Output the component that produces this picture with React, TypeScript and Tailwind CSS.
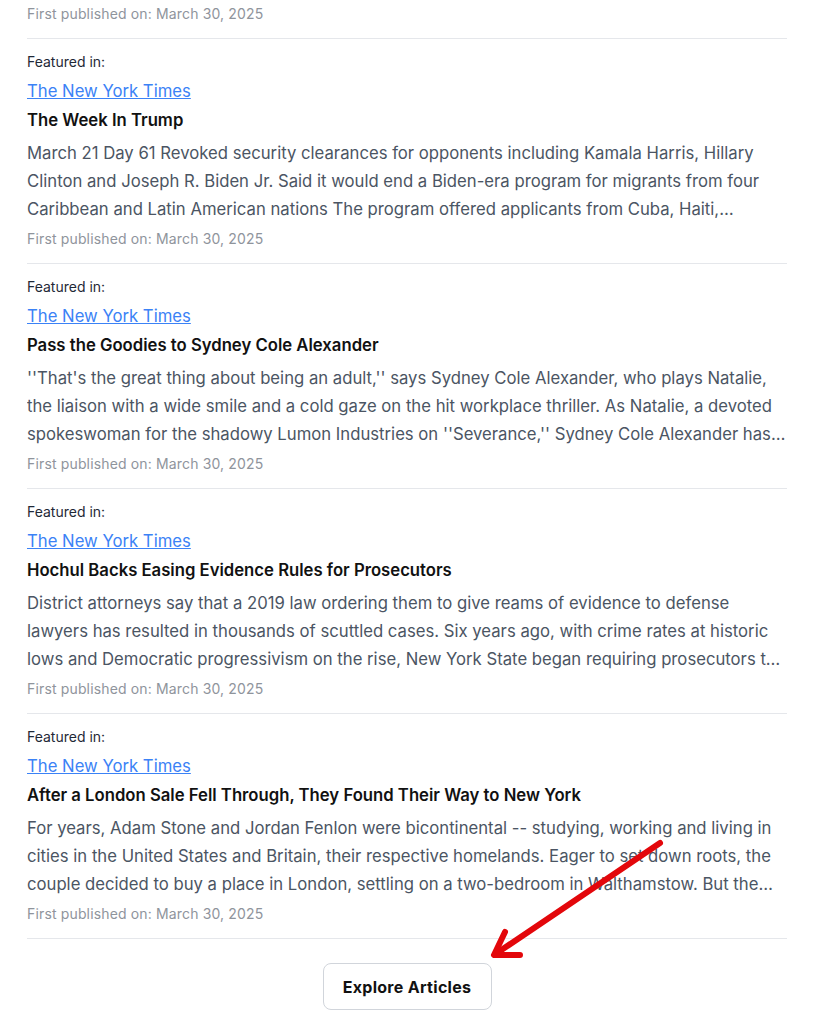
import React from 'react';

interface Article {
  title: string;
  summary: string;
}

const ARTICLES: Article[] = [
  {
    title: 'The Week In Trump',
    summary:
      'March 21 Day 61 Revoked security clearances for opponents including Kamala Harris, Hillary Clinton and Joseph R. Biden Jr. Said it would end a Biden-era program for migrants from four Caribbean and Latin American nations The program offered applicants from Cuba, Haiti, Nicaragua and Venezuela a chance to live and work in the United States.',
  },
  {
    title: 'Pass the Goodies to Sydney Cole Alexander',
    summary:
      "''That's the great thing about being an adult,'' says Sydney Cole Alexander, who plays Natalie, the liaison with a wide smile and a cold gaze on the hit workplace thriller. As Natalie, a devoted spokeswoman for the shadowy Lumon Industries on ''Severance,'' Sydney Cole Alexander has become a fan favorite.",
  },
  {
    title: 'Hochul Backs Easing Evidence Rules for Prosecutors',
    summary:
      'District attorneys say that a 2019 law ordering them to give reams of evidence to defense lawyers has resulted in thousands of scuttled cases. Six years ago, with crime rates at historic lows and Democratic progressivism on the rise, New York State began requiring prosecutors to turn over evidence.',
  },
  {
    title: 'After a London Sale Fell Through, They Found Their Way to New York',
    summary:
      'For years, Adam Stone and Jordan Fenlon were bicontinental -- studying, working and living in cities in the United States and Britain, their respective homelands. Eager to set down roots, the couple decided to buy a place in London, settling on a two-bedroom in Walthamstow. But the deal fell apart.',
  },
];

const font = { fontFamily: 'Inter, "Noto Sans", sans-serif' };

const ArticleItem: React.FC<{ article: Article }> = ({ article }) => (
  <div className="h-[225px] border-t border-[#e5e7eb] pt-[14px]">
    <p className="text-[14px] leading-[18px] text-[#1f2937]">Featured in:</p>
    <a href="#" className="mt-[6px] block text-[16.7px] leading-[28px] text-[#3b82f6] underline w-fit">
      The New York Times
    </a>
    <h3 className="mt-[1px] text-[16.7px] leading-[28px] font-semibold text-[#111]">{article.title}</h3>
    <p className="mt-[5px] h-[84px] text-[16.7px] leading-[28px] text-[#4b5563] line-clamp-3">{article.summary}</p>
    <p className="mt-[6px] text-[14px] tracking-[0.15px] leading-[20px] text-[#8f949c]">First published on: March 30, 2025</p>
  </div>
);

export default function App() {
  return (
    <div className="relative min-h-[1024px] bg-white" style={font}>
      <div className="ml-[27px] w-[760px]">
        <p className="pt-[4px] pb-[14px] text-[14px] tracking-[0.15px] leading-[20px] text-[#8f949c]">
          First published on: March 30, 2025
        </p>
        {ARTICLES.map((a) => (
          <ArticleItem key={a.title} article={a} />
        ))}
        <div className="border-t border-[#e5e7eb] flex justify-center pt-[24px]">
          <button className="h-[47px] w-[169px] rounded-lg border border-[#d1d5db] bg-white text-[16px] tracking-[0.3px] font-bold text-[#111]">
            Explore Articles
          </button>
        </div>
      </div>

      {/* red annotation arrow */}
      <svg className="absolute left-0 top-0 pointer-events-none" width="819" height="1024">
        <path d="M660 843 L497 953" stroke="#e3070b" strokeWidth="6" strokeLinecap="round" fill="none" />
        <path d="M505 932 L494 955 L520 955" stroke="#e3070b" strokeWidth="6" strokeLinecap="round" strokeLinejoin="round" fill="none" />
      </svg>
    </div>
  );
}
